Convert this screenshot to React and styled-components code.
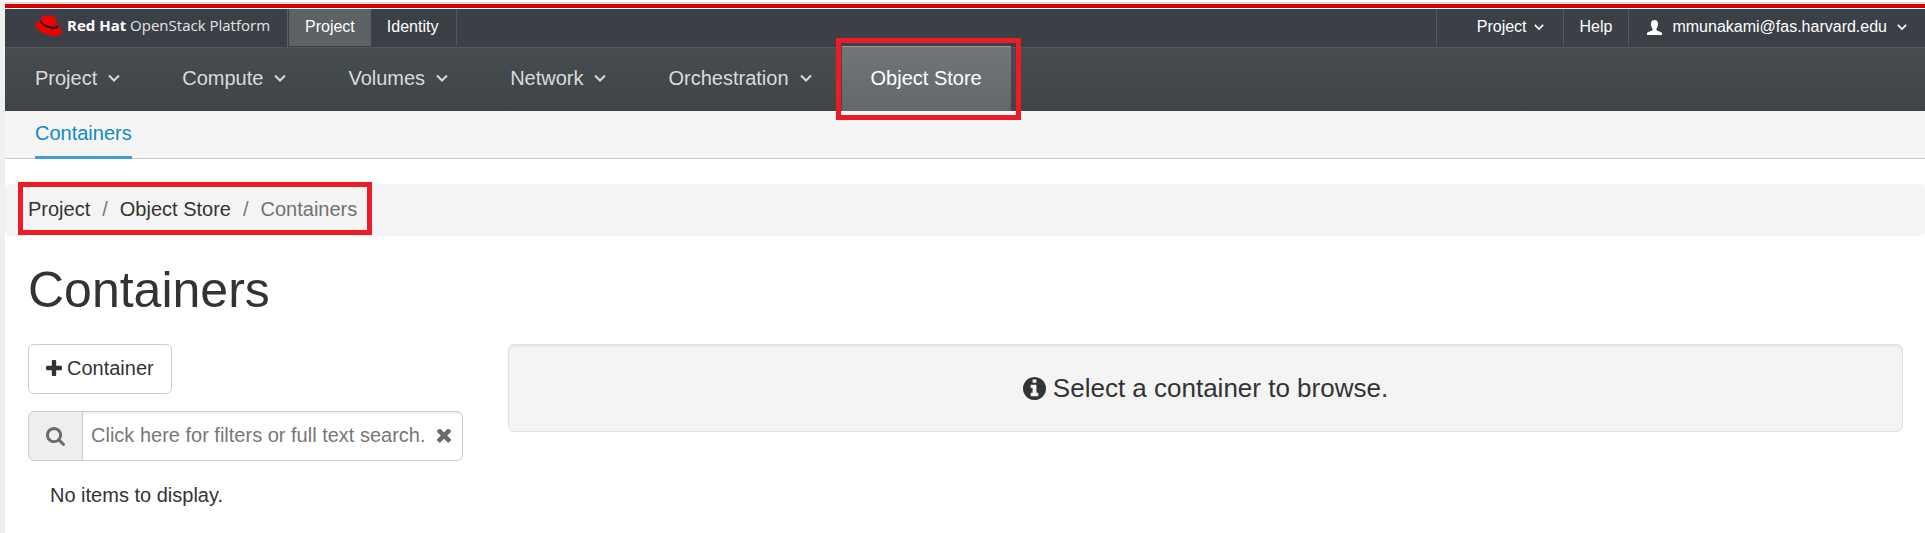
import React from "react";
import styled, { createGlobalStyle, css } from "styled-components";

const Global = createGlobalStyle`
  *, *::before, *::after { box-sizing: border-box; }
  html { background: #fff; }
  body {
    margin: 0;
    color: #333;
    font: 20px/28px "Liberation Sans", Arial, sans-serif;
  }
  html, body { height: 100%; }
  #root { display: flex; min-height: 100%; }
  a { color: inherit; text-decoration: none; }
  ul, ol { list-style: none; margin: 0; padding: 0; }
  svg { display: block; flex: none; }
`;

const Page = styled.div`
  flex: 1;
  min-width: 0;
  min-height: 100vh;
  border-left: 5px solid #f0f0f0;
  padding-top: 2px;
`;

const Masthead = styled.header`
  border-top: 2px solid #ddd;
`;

const RedRule = styled.div`
  height: 5px;
  background: #d60000;
  border-bottom: 1px solid #fff;
`;

const TopBar = styled.div`
  display: flex;
  align-items: stretch;
  height: 39px;
  background: #3b3f46;
  border-bottom: 1px solid #53575b;
  color: #fff;
  font-size: 16px;
`;

const Brand = styled.a`
  display: flex;
  align-items: flex-start;
  gap: 5px;
  width: 283px;
  padding: 6px 0 0 30px;
  border-right: 1px solid #5c6065;
`;

const BrandText = styled.span`
  color: #e4e4e6;
  font: 15px/20px "Open Sans", sans-serif;
  white-space: nowrap;
  b { color: #fff; font-weight: 700; }
`;

const TopList = styled.ul`
  display: flex;
  margin-left: ${(p) => (p.$end ? "auto" : "1px")};
  height: 37px;
`;

const TopItem = styled.li`
  ${(p) => p.$rule === "left" && css`border-left: 1px solid #54585d;`}
  ${(p) => p.$rule === "right" && css`border-right: 1px solid #54585d;`}
  ${(p) => p.$active && css`background: #5d6265;`}
`;

const TopLink = styled.a`
  display: flex;
  align-items: center;
  gap: ${(p) => p.$gap ?? 7}px;
  height: 36px;
  padding: 0 ${(p) => p.$right ?? 16}px 0 ${(p) => p.$left ?? 16}px;
  white-space: nowrap;
`;

const MainNav = styled.nav`
  height: 63px;
  background: linear-gradient(#474c50, #3f4447);
  color: #dbdbdb;
  ul { display: flex; }
`;

const NavLink = styled.a`
  display: flex;
  align-items: center;
  gap: 11px;
  height: 63px;
  padding: 0 32px 4px 30px;
  white-space: nowrap;
  ${(p) => p.$active && css`
    height: 65px;
    margin: -2px 0 0 -2px;
    padding: 0 29px 3px;
    color: #fff;
    background: linear-gradient(#727679, #63666a);
    border-top: 1px solid #96999b;
  `}
`;

const NavItem = styled.li`
  position: relative;
`;

const Highlight = styled.span`
  position: absolute;
  inset: ${(p) => p.$inset};
  border: 5px solid #ed1c24;
  pointer-events: none;
`;

const SubNav = styled.nav`
  display: flex;
  height: 48px;
  padding-left: 30px;
  background: #f5f5f5;
  border-bottom: 1px solid #ccc;
`;

const SubLink = styled.a`
  height: 48px;
  padding-top: 8px;
  color: #0f8ac3;
  border-bottom: 3px solid #3f9cd8;
`;

const Breadcrumb = styled.nav`
  display: flex;
  margin-top: 25px;
  padding: 11px 23px 13px;
  background: #f4f4f4;
  border-radius: 6px;
`;

const Trail = styled.ol`
  position: relative;
  display: flex;
`;

const Crumb = styled.li`
  color: ${(p) => (p.$current ? "#717171" : "#333")};
  li + &::before {
    content: "/";
    padding: 0 12px;
    color: #777;
  }
`;

const Title = styled.h1`
  margin: 26px 23px;
  font-size: 50px;
  font-weight: 400;
  line-height: 56px;
`;

const Columns = styled.main`
  display: flex;
  align-items: flex-start;
`;

const Column = styled.section`
  width: ${(p) => p.$width};
  padding: 0 22px 0 23px;
`;

const AddButton = styled.button`
  display: flex;
  align-items: center;
  gap: 5px;
  height: 50px;
  padding: 0 17px 2px;
  color: #333;
  font: inherit;
  background: #fff;
  border: 1px solid #ccc;
  border-radius: 6px;
`;

const SearchBox = styled.form`
  display: flex;
  height: 50px;
  margin-top: 17px;
  border: 1px solid #ccc;
  border-radius: 6px;
  overflow: hidden;
  color: #6b6b6b;
`;

const SearchLabel = styled.label`
  display: flex;
  align-items: center;
  padding: 0 17px;
  background: #eee;
  border-right: 1px solid #ccc;
`;

const Field = styled.div`
  display: flex;
  align-items: center;
  flex: 1;
  min-width: 0;
  padding: 0 11px 0 8px;
  box-shadow: inset 0 2px 2px rgba(0, 0, 0, 0.07);
`;

const SearchInput = styled.input`
  flex: 1;
  min-width: 0;
  padding: 0 0 3px;
  font: inherit;
  color: #333;
  background: transparent;
  border: 0;
  outline: 0;
  &::placeholder { color: #777; opacity: 1; }
`;

const ClearButton = styled.button`
  padding: 0;
  color: inherit;
  background: none;
  border: 0;
`;

const Empty = styled.p`
  margin: 20px 22px;
`;

const Well = styled.div`
  display: flex;
  align-items: center;
  justify-content: center;
  gap: 7px;
  height: 88px;
  font-size: 26px;
  background: #f4f4f4;
  border: 1px solid #e1e1e1;
  border-radius: 6px;
  box-shadow: inset 0 2px 2px rgba(0, 0, 0, 0.05);
`;

const shapes = {
  down: ["407 653 988 582", "M1395 736q0 13-10 23l-466 466q-10 10-23 10t-23-10l-466-466q-10-10-10-23t10-23l50-50q10-10 23-10t23 10l393 393 393-393q10-10 23-10t23 10l50 50q10 10 10 23z"],
  plus: ["192 128 1408 1408", "M1600 736v192q0 40-28 68t-68 28h-416v416q0 40-28 68t-68 28h-192q-40 0-68-28t-28-68v-416h-416q-40 0-68-28t-28-68v-192q0-40 28-68t68-28h416v-416q0-40 28-68t68-28h192q40 0 68 28t28 68v416h416q40 0 68 28t28 68z"],
  search: ["64 128 1664 1664", "M1216 832q0-185-131.5-316.5t-316.5-131.5-316.5 131.5-131.5 316.5 131.5 316.5 316.5 131.5 316.5-131.5 131.5-316.5zm512 832q0 52-38 90t-90 38q-54 0-90-38l-343-342q-179 124-399 124-143 0-273.5-55.5t-225-150-150-225-55.5-273.5 55.5-273.5 150-225 225-150 273.5-55.5 273.5 55.5 225 150 150 225 55.5 273.5q0 220-124 399l343 343q37 37 37 90z"],
  times: ["302 434 1188 1120", "M1490 1322q0 40-28 68l-136 136q-28 28-68 28t-68-28l-294-294-294 294q-28 28-68 28t-68-28l-136-136q-28-28-28-68t28-68l294-294-294-294q-28-28-28-68t28-68l136-136q28-28 68-28t68 28l294 294 294-294q28-28 68-28t68 28l136 136q28 28 28 68t-28 68l-294 294 294 294q28 28 28 68z"],
  info: ["128 128 1536 1536", "M1152 1376v-160q0-14-9-23t-23-9h-96v-512q0-14-9-23t-23-9h-320q-14 0-23 9t-9 23v160q0 14 9 23t23 9h96v320h-96q-14 0-23 9t-9 23v160q0 14 9 23t23 9h448q14 0 23-9t9-23zm-128-896v-160q0-14-9-23t-23-9h-192q-14 0-23 9t-9 23v160q0 14 9 23t23 9h192q14 0 23-9t9-23zm640 416q0 209-103 385.5t-279.5 279.5-385.5 103-385.5-103-279.5-279.5-103-385.5 103-385.5 279.5-279.5 385.5-103 385.5 103 279.5 279.5 103 385.5z"],
  user: ["0 0 15 15", "M7.500 0C9.800 0 11 1.600 11 4c0 1.800-.6 3.600-1.500 4.500v1.300c0 .5.300.7.800.9l3.500 1.400c.8.300 1.200.8 1.200 1.600V15H0v-1.300c0-.8.400-1.300 1.200-1.600l3.500-1.400c.5-.2.800-.4.800-.9V8.500C4.600 7.600 4 5.800 4 4c0-2.400 1.200-4 3.500-4z"],
};

const Icon = ({ name, width, height = width }) => (
  <svg width={width} height={height} viewBox={shapes[name][0]} fill="currentColor" aria-hidden="true">
    <path d={shapes[name][1]} />
  </svg>
);

const Chevron = styled.svg.attrs({ viewBox: "0 0 12 8", "aria-hidden": true, children: <path d="M1 1.500l5 5 5-5" /> })`
  width: ${(p) => p.$width}px;
  height: 8px;
  fill: none;
  stroke: currentColor;
  stroke-width: 2;
`;

const Hat = () => (
  <svg width="27" height="21" viewBox="0 0 27 21" aria-hidden="true">
    <path fill="#e00" d="M18 12c1.800 0 4.400-.4 4.400-2.500 0-.3 0-.4-.1-.6l-1.100-4.700c-.3-1-.5-1.500-2.300-2.400C17.500 1.100 14.500 0 13.600 0c-.8 0-1.100 1-2 1-1 0-1.700-.8-2.600-.8-.9 0-1.400.6-1.800 1.800L5.900 5.800c0 2.700 7 6.200 12.100 6.200zm4.700-1.200c.2.800.2.900.2 1 0 1.400-1.600 2.200-3.700 2.200C14.400 14 5.400 9.400 5.400 7.200c0-.3 0-.6.2-.9C3.800 6.400.2 7 .2 10c0 5 11.700 11 20.900 11 4.300 0 5.700-2.100 5.700-4.200 0-2.300-1.400-4.500-4.100-6z" />
    <path fill="#111" d="M22.700 10.800c.2.800.2.900.2 1 0 1.400-1.600 2.200-3.700 2.200C14.400 14 5.400 9.400 5.400 7.200c0-.3 0-.6.2-.9l.4-1c0 3.200 7 6.700 12 6.700 1.800 0 4.400-.4 4.400-2.500z" />
  </svg>
);

const menus = ["Project", "Compute", "Volumes", "Network", "Orchestration"];

export default function App() {
  return (
    <>
      <Global />
      <Page>
        <Masthead>
          <RedRule />
          <TopBar>
            <Brand href="#">
              <Hat />
              <BrandText><b>Red Hat</b> OpenStack Platform</BrandText>
            </Brand>
            <TopList>
              <TopItem $active><TopLink href="#">Project</TopLink></TopItem>
              <TopItem $rule="right"><TopLink href="#" $right={18}>Identity</TopLink></TopItem>
            </TopList>
            <TopList $end>
              <TopItem $rule="left">
                <TopLink href="#" $left={40} $right={19}>Project <Chevron $width={10} /></TopLink>
              </TopItem>
              <TopItem $rule="left"><TopLink href="#">Help</TopLink></TopItem>
              <TopItem $rule="left">
                <TopLink href="#" $left={18} $right={18} $gap={10}>
                  <Icon name="user" width={15} />
                  mmunakami@fas.harvard.edu
                  <Chevron $width={10} />
                </TopLink>
              </TopItem>
            </TopList>
          </TopBar>
          <MainNav>
            <ul>
              {menus.map((label) => (
                <NavItem key={label}>
                  <NavLink href="#">{label} <Chevron $width={12} /></NavLink>
                </NavItem>
              ))}
              <NavItem>
                <NavLink href="#" $active>Object Store</NavLink>
                <Highlight $inset="-10px -10px -9px -8px" />
              </NavItem>
            </ul>
          </MainNav>
          <SubNav><SubLink href="#">Containers</SubLink></SubNav>
        </Masthead>
        <Breadcrumb aria-label="Breadcrumb">
          <Trail>
            <Crumb><a href="#">Project</a></Crumb>
            <Crumb><a href="#">Object Store</a></Crumb>
            <Crumb $current>Containers</Crumb>
            <Highlight $inset="-13px -15px -12px -10px" as="li" aria-hidden="true" />
          </Trail>
        </Breadcrumb>
        <Title>Containers</Title>
        <Columns>
          <Column $width="25%">
            <AddButton type="button"><Icon name="plus" width={16} />Container</AddButton>
            <SearchBox>
              <SearchLabel htmlFor="search" aria-label="Search"><Icon name="search" width={19} /></SearchLabel>
              <Field>
                <SearchInput id="search" placeholder="Click here for filters or full text search." />
                <ClearButton type="button" aria-label="Clear"><Icon name="times" width={14} /></ClearButton>
              </Field>
            </SearchBox>
            <Empty>No items to display.</Empty>
          </Column>
          <Column $width="75%">
            <Well><Icon name="info" width={23} />Select a container to browse.</Well>
          </Column>
        </Columns>
      </Page>
    </>
  );
}
